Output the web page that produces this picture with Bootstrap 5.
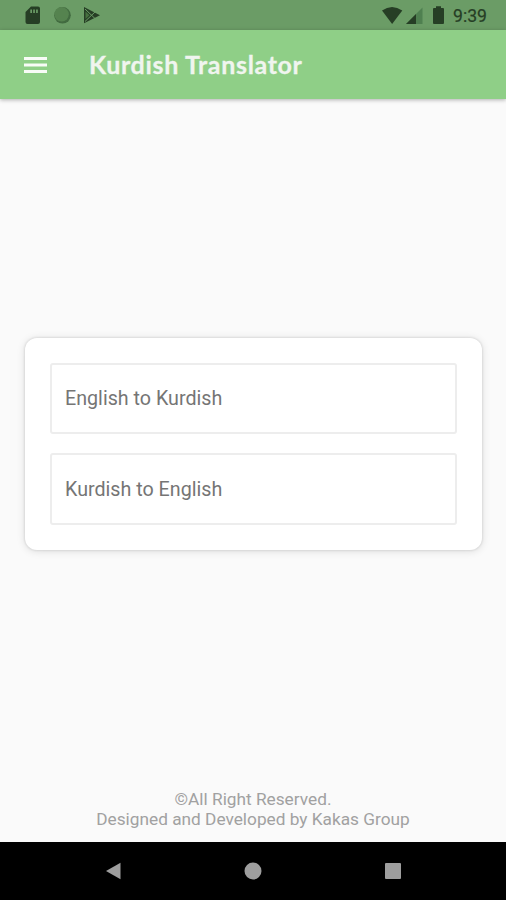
<!DOCTYPE html>
<html lang="en">
<head>
<meta charset="utf-8">
<meta name="viewport" content="width=device-width, initial-scale=1">
<title>Kurdish Translator</title>
<link href="https://cdn.jsdelivr.net/npm/bootstrap@5.3.0/dist/css/bootstrap.min.css" rel="stylesheet">
<style>
body{font-family:Roboto,sans-serif;background:#fafafa;height:900px;overflow:hidden}
.status-bar{height:30px;background:#6b9c66;color:#263e25;padding:0 19px 0 24px}
.status-time{font-size:17.6px;font-weight:400;-webkit-text-stroke:.2px #263e25;line-height:30px;width:34px;white-space:nowrap;padding-top:1px}
.app-bar{height:69px;background:#8fcf87;box-shadow:0 1px 4px rgba(0,0,0,.3);padding:0 24px;z-index:1}
.menu-btn{width:23px;height:16px}
.app-title{font-family:Lato,sans-serif;font-weight:700;font-size:25px;line-height:32px;letter-spacing:.67px;-webkit-text-stroke:.3px #f0f5ef;color:#f0f5ef;margin:-1px 0 0 42px;white-space:nowrap}
.choices-wrap{padding-bottom:1px}
.choices{width:457px;height:212px;margin-left:1px;border-radius:12px;padding:25px;gap:19px;box-shadow:0 0 2px 1px rgba(0,0,0,.07),0 1px 8px rgba(0,0,0,.13)}
.choice{height:72px;border:2px solid #ededed;border-radius:3px;color:#757575;font-size:19.7px;padding:2px 13px 0;background:#fff}
.credits{font-size:17.25px;line-height:20px;color:#a1a1a1;padding-bottom:13px}
.nav-keys{height:58px;background:#000;padding:0 104px}
</style>
</head>
<body class="d-flex flex-column">
<div class="status-bar d-flex align-items-center justify-content-between flex-shrink-0">
  <div class="d-flex align-items-center">
    <svg width="77" height="30" viewBox="0 0 77 30">
      <path fill="#263e25" fill-rule="evenodd" d="M7 6.500H14Q16 6.500 16 8.500V22Q16 24 14 24H3.500Q1.500 24 1.500 22V12ZM6.300 9.500V13H8V9.500ZM9.200 9.500V13H10.900V9.500ZM12.100 9.500V13H13.800V9.500Z"/>
      <circle cx="38.500" cy="15.300" r="8.300" fill="#426b40"/>
      <circle cx="37.600" cy="14.300" r="7.200" fill="#55834f"/>
      <path fill="#263e25" d="M60 7L76 15.300 60 23.300Z"/>
      <path fill="none" stroke="#6b9c66" stroke-width="1" d="M61 9L71.500 19M61 21.500L71.500 11.500"/>
      <path fill="#46703f" d="M61.500 11.500L65.500 15.300 61.500 19Z"/>
    </svg>
  </div>
  <div class="d-flex align-items-center">
    <svg width="71" height="30" viewBox="382 0 71 30">
      <path fill="#263e25" d="M382 10.500Q392 3.500 402.300 10.500L392.100 24Z"/>
      <path fill="#4f8050" d="M422.500 7.500V24H406Z"/>
      <path fill="#263e25" d="M416 14V24H406Z"/>
      <path fill="#263e25" d="M436 6.200H441V8H443Q444 8 444 9V23Q444 24 443 24H434Q433 24 433 23V9Q433 8 434 8H436Z"/>
    </svg>
    <span class="status-time">9:39</span>
  </div>
</div>
<header class="app-bar d-flex align-items-center position-relative flex-shrink-0">
  <button class="btn border-0 p-0 d-flex" type="button" aria-label="Menu">
    <svg class="menu-btn" viewBox="0 0 23 16" fill="#f8fcf7"><path d="M0 0H23V3H0ZM0 6.500H23V9.500H0ZM0 13H23V16H0Z"/></svg>
  </button>
  <h1 class="app-title">Kurdish Translator</h1>
</header>
<main class="flex-grow-1 d-flex flex-column align-items-center">
  <div class="choices-wrap my-auto">
    <section class="choices bg-white d-flex flex-column">
      <button class="choice w-100 text-start" type="button">English to Kurdish</button>
      <button class="choice w-100 text-start" type="button">Kurdish to English</button>
    </section>
  </div>
  <footer class="credits text-center"><div>©All Right Reserved.</div><div>Designed and Developed by Kakas Group</div></footer>
</main>
<nav class="nav-keys d-flex align-items-center justify-content-between flex-shrink-0">
  <svg width="18" height="18" viewBox="0 0 18 18" fill="#9e9e9e"><path d="M2 9L16.500 .8V17.200Z"/></svg>
  <svg width="18" height="18" viewBox="0 0 18 18" fill="#9e9e9e"><circle cx="9" cy="9" r="8.500"/></svg>
  <svg width="18" height="18" viewBox="0 0 18 18" fill="#9e9e9e"><rect x="1" y="1" width="16" height="16" rx="1"/></svg>
</nav>
<script src="https://cdn.jsdelivr.net/npm/bootstrap@5.3.0/dist/js/bootstrap.bundle.min.js"></script>
</body>
</html>
